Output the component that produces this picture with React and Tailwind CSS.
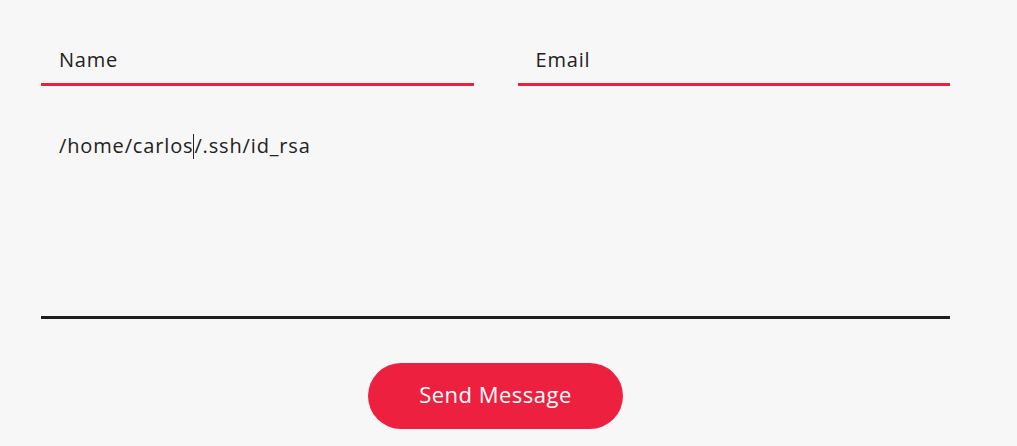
import React from 'react'

function Field({ label }) {
  return (
    <div className="flex-1 h-[52px] border-b-[3px] border-[#e8213d] flex items-center px-[18px] pt-[2px] text-[20px] tracking-[0.8px] text-[#222]">
      {label}
    </div>
  )
}

export default function App() {
  return (
    <div className="w-[1017px] h-[446px] bg-[#f7f7f7] overflow-hidden" style={{ fontFamily: '"Open Sans", "Noto Sans", sans-serif' }}>
      <div className="ml-[41px] w-[909px] pt-[34px]">
        <div className="flex gap-[44px]">
          <Field label="Name" />
          <Field label="Email" />
        </div>

        <div className="mt-[24px] h-[209px] border-b-[3px] border-[#1e1e1e] px-[18px] pt-[22px] text-[20px] tracking-[0.85px] text-[#222] leading-[28px]">
          /home/carlos<span className="inline-block w-px h-[25px] bg-[#222] align-[-6px]" />/.ssh/id_rsa
        </div>

        <div className="flex justify-center mt-[44px]">
          <button className="w-[255px] h-[66px] pb-[3px] rounded-full bg-[#ee2040] text-white text-[22px] font-medium tracking-[0.5px]">
            Send Message
          </button>
        </div>
      </div>
    </div>
  )
}
